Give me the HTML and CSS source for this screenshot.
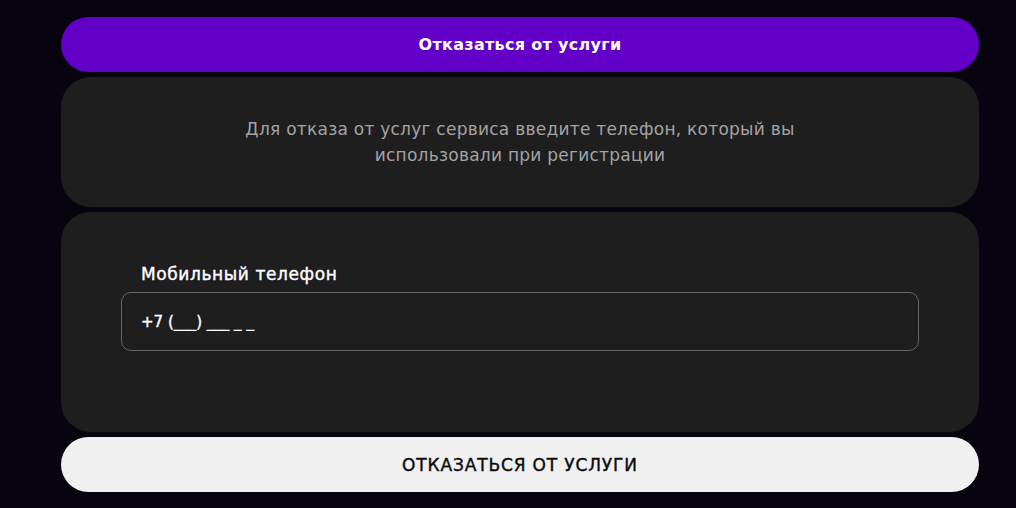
FILE: index.html
```html
<!DOCTYPE html>
<html>

<head>
    <title>Отказ от услуги</title>
    <link rel="stylesheet" href="styles.css">
</head>

<body>
    <div class="page">
        <div class="top-button">Отказаться от услуги</div>

        <div class="card info">
            <p>Для отказа от услуг сервиса введите телефон, который вы<br>использовали при регистрации</p>
        </div>

        <div class="card form">
            <label for="phone">Мобильный телефон</label>
            <input id="phone" type="text" value="+7 (___) ___ _ _">
        </div>

        <button class="submit">ОТКАЗАТЬСЯ ОТ УСЛУГИ</button>
    </div>
</body>

</html>
```

FILE: styles.css
```css
body {
    margin: 0;
    background-color: #07040f;
    font-family: "DejaVu Sans", sans-serif;
    height: 100vh;
    overflow: hidden;
}

.page {
    width: 918px;
    margin-left: 61px;
    padding-top: 17px;
    display: flex;
    flex-direction: column;
    gap: 5px;
}

.top-button {
    height: 55px;
    border-radius: 28px;
    background-color: #6200c8;
    color: #fff;
    font-weight: bold;
    font-size: 16px;
    letter-spacing: 0.3px;
    display: flex;
    justify-content: center;
    align-items: center;
}

.card {
    background-color: #1e1e1e;
    border-radius: 30px;
}

.info {
    height: 130px;
    display: flex;
    justify-content: center;
    align-items: center;
}

.info p {
    margin: 0;
    color: #a3a3a3;
    font-size: 17px;
    line-height: 26px;
    text-align: center;
    letter-spacing: 0.25px;
}

.form {
    height: 220px;
    box-sizing: border-box;
    padding: 52px 60px 0;
    display: flex;
    flex-direction: column;
}

.form label {
    color: #fff;
    font-size: 17px;
    letter-spacing: 0.6px;
    -webkit-text-stroke: 0.4px #fff;
    margin-left: 20px;
    margin-bottom: 8px;
}

.form input {
    height: 59px;
    box-sizing: border-box;
    border: 1px solid #666;
    border-radius: 10px;
    background: transparent;
    color: #fff;
    font-family: "DejaVu Sans", sans-serif;
    font-size: 15px;
    -webkit-text-stroke: 0.4px #fff;
    padding: 0 19px;
    outline: none;
}

.submit {
    height: 55px;
    border: none;
    border-radius: 28px;
    background-color: #f0f0f0;
    color: #0c0c0c;
    font-family: "DejaVu Sans", sans-serif;
    font-size: 17px;
    letter-spacing: 0.85px;
    -webkit-text-stroke: 0.4px #0c0c0c;
}
```
